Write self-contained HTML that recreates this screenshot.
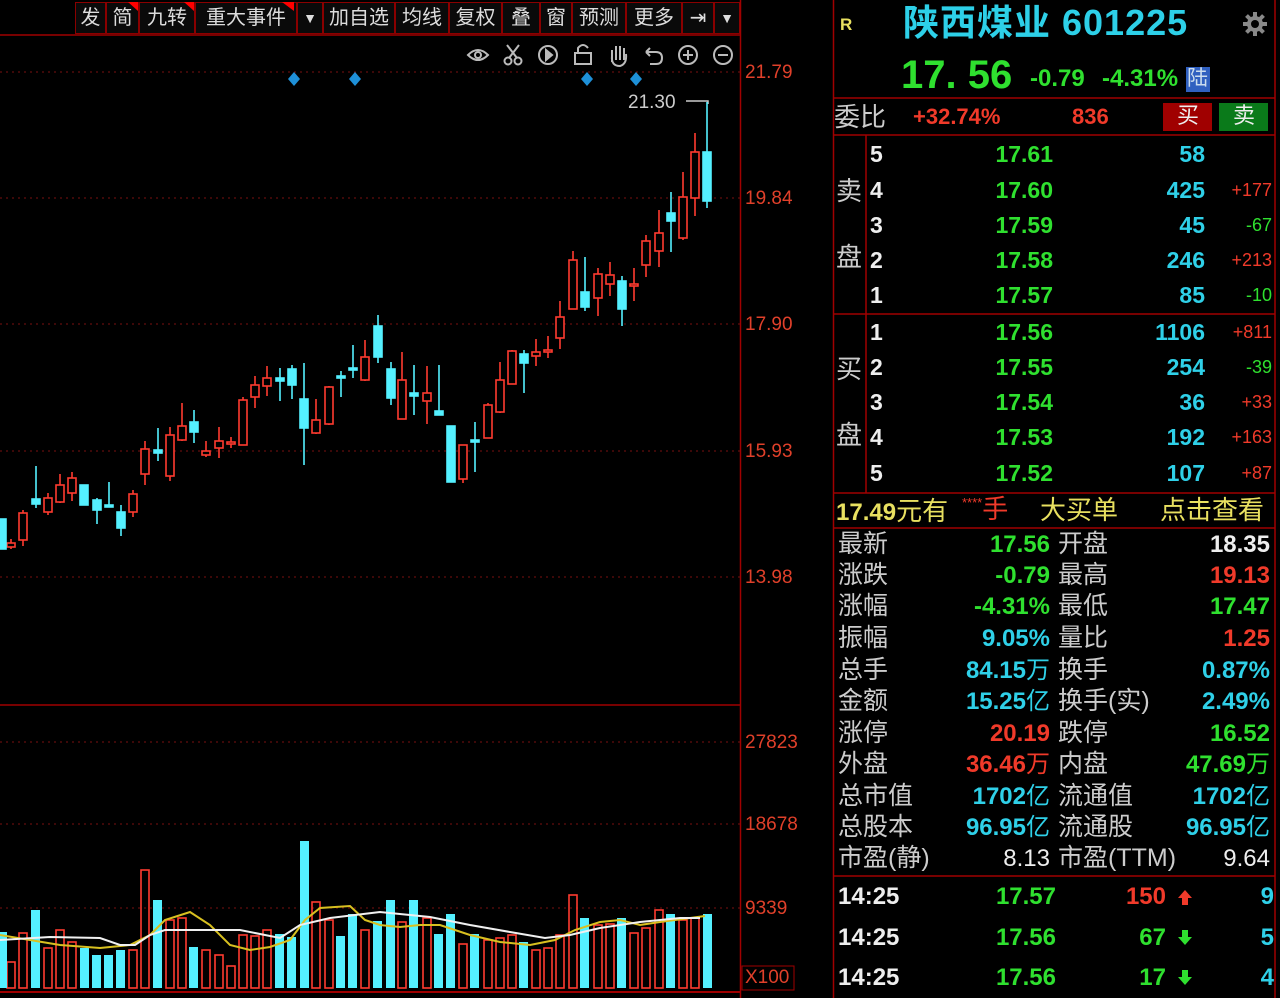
<!DOCTYPE html>
<html><head><meta charset="utf-8"><style>
body{margin:0;width:1280px;height:998px;background:#000;overflow:hidden;position:relative;font-family:"Liberation Sans","Noto Sans CJK SC",sans-serif;}
.a{position:absolute;white-space:nowrap;line-height:1}
.tb{position:absolute;top:2px;height:32px;border:1px solid #8a0000;box-sizing:border-box;color:#ddd;font-size:20px;line-height:30px;text-align:center;background:#0a0a0a}
.ax{position:absolute;left:745px;color:#e0402a;font-size:19px;line-height:1}
.g{color:#2fe02f}.r{color:#f03a2a}.c{color:#2fd0e8}.w{color:#eee}.gr{color:#ccc}.y{color:#e8e060}
.lb{position:absolute;left:838px;color:#ccc;font-size:25px;line-height:1}
.lb2{position:absolute;left:1058px;color:#ccc;font-size:25px;line-height:1}
.v1{position:absolute;right:230px;font-size:24px;font-weight:bold;line-height:1}
.v2{position:absolute;right:10px;font-size:24px;font-weight:bold;line-height:1}
.ob{position:absolute;font-size:23px;font-weight:bold;line-height:1}
</style></head><body>

<div class="tb" style="left:75px;width:31px">发</div>
<div class="tb" style="left:106px;width:33px">简</div>
<div class="tb" style="left:139px;width:56px">九转</div>
<div class="tb" style="left:195px;width:102px">重大事件</div>
<div class="tb" style="left:297px;width:26px;font-size:14px">▼</div>
<div class="tb" style="left:323px;width:72px">加自选</div>
<div class="tb" style="left:395px;width:54px">均线</div>
<div class="tb" style="left:449px;width:53px">复权</div>
<div class="tb" style="left:502px;width:38px">叠</div>
<div class="tb" style="left:540px;width:32px">窗</div>
<div class="tb" style="left:572px;width:54px">预测</div>
<div class="tb" style="left:626px;width:56px">更多</div>
<div class="tb" style="left:682px;width:32px">⇥</div>
<div class="tb" style="left:714px;width:26px;font-size:14px">▼</div>

<svg width="840" height="998" style="position:absolute;left:0;top:0">
<polygon points="128,2 138,2 138,11" fill="#f00"/>
<polygon points="184,2 194,2 194,11" fill="#f00"/>
<polygon points="282,2 294,2 294,11" fill="#f00"/>
<line x1="0" y1="35" x2="740" y2="35" stroke="#a00000" stroke-width="1.5"/>
<line x1="740.5" y1="0" x2="740.5" y2="998" stroke="#a00000" stroke-width="1.5"/>
<line x1="0" y1="705" x2="740" y2="705" stroke="#a00000" stroke-width="1.5"/>
<line x1="0" y1="992" x2="740" y2="992" stroke="#a00000" stroke-width="2"/>
<g stroke="#7a1010" stroke-dasharray="2,4" stroke-width="1">
<line x1="0" y1="72" x2="740" y2="72"/><line x1="0" y1="198" x2="740" y2="198"/><line x1="0" y1="324" x2="740" y2="324"/><line x1="0" y1="451" x2="740" y2="451"/><line x1="0" y1="577" x2="740" y2="577"/>
<line x1="0" y1="742" x2="740" y2="742"/><line x1="0" y1="824" x2="740" y2="824"/><line x1="0" y1="908" x2="740" y2="908"/>
</g>
<g stroke="#bbb" stroke-width="2" fill="none">
<path d="M468 55 Q478 45 488 55 Q478 65 468 55Z"/><circle cx="478" cy="55" r="3"/>
<circle cx="508" cy="61" r="3.5"/><circle cx="518" cy="61" r="3.5"/><path d="M509 58 L519 45 M517 58 L507 45"/>
<circle cx="548" cy="55" r="9"/><path d="M546 50 L552 55 L546 60Z" fill="#bbb"/>
<rect x="575" y="53" width="16" height="11"/><path d="M578 53 V48 Q583 42 588 48"/>
<path d="M612 62 V50 M616 60 V46 M620 60 V46 M624 60 V48 M612 56 Q611 66 620 66 Q627 64 626 54"/>
<path d="M646 52 H656 Q662 52 662 58 Q662 64 656 64 H650 M646 52 L650 48 M646 52 L650 56"/>
<circle cx="688" cy="55" r="9"/><path d="M683 55 H693 M688 50 V60"/>
<circle cx="723" cy="55" r="9"/><path d="M718 55 H728"/>
</g>
<g fill="#1e90d8"><path d="M294 72 L300 79 L294 86 L288 79Z"/><path d="M355 72 L361 79 L355 86 L349 79Z"/><path d="M587 72 L593 79 L587 86 L581 79Z"/><path d="M636 72 L642 79 L636 86 L630 79Z"/></g>
<text x="628" y="108" fill="#ccc" font-size="19" font-family="Liberation Sans">21.30</text>
<path d="M686 101 H708 V104" stroke="#ccc" stroke-width="1.5" fill="none"/>

<g stroke-width="1.6">
<g stroke="#ff3b2f" fill="#000">
<line x1="11" y1="539" x2="11" y2="549"/><rect x="7" y="543" width="8" height="4"/>
<line x1="23" y1="510" x2="23" y2="546"/><rect x="19" y="513" width="8" height="27"/>
<line x1="48" y1="493" x2="48" y2="515"/><rect x="44" y="498" width="8" height="14"/>
<line x1="60" y1="474" x2="60" y2="503"/><rect x="56" y="485" width="8" height="17"/>
<line x1="72" y1="472" x2="72" y2="501"/><rect x="68" y="478" width="8" height="15"/>
<line x1="133" y1="490" x2="133" y2="517"/><rect x="129" y="494" width="8" height="18"/>
<line x1="145" y1="441" x2="145" y2="485"/><rect x="141" y="449" width="8" height="25"/>
<line x1="170" y1="427" x2="170" y2="481"/><rect x="166" y="435" width="8" height="41"/>
<line x1="182" y1="403" x2="182" y2="441"/><rect x="178" y="426" width="8" height="14"/>
<line x1="206" y1="441" x2="206" y2="457"/><rect x="202" y="451" width="8" height="4"/>
<line x1="219" y1="427" x2="219" y2="458"/><rect x="215" y="441" width="8" height="7"/>
<line x1="231" y1="437" x2="231" y2="448"/><rect x="227" y="442" width="8" height="2"/>
<line x1="243" y1="397" x2="243" y2="445"/><rect x="239" y="400" width="8" height="45"/>
<line x1="255" y1="376" x2="255" y2="408"/><rect x="251" y="385" width="8" height="12"/>
<line x1="267" y1="366" x2="267" y2="396"/><rect x="263" y="378" width="8" height="8"/>
<line x1="316" y1="399" x2="316" y2="434"/><rect x="312" y="420" width="8" height="13"/>
<line x1="329" y1="386" x2="329" y2="425"/><rect x="325" y="387" width="8" height="37"/>
<line x1="365" y1="340" x2="365" y2="381"/><rect x="361" y="357" width="8" height="23"/>
<line x1="402" y1="352" x2="402" y2="419"/><rect x="398" y="380" width="8" height="39"/>
<line x1="427" y1="366" x2="427" y2="424"/><rect x="423" y="393" width="8" height="8"/>
<line x1="463" y1="445" x2="463" y2="483"/><rect x="459" y="445" width="8" height="34"/>
<line x1="488" y1="403" x2="488" y2="438"/><rect x="484" y="405" width="8" height="33"/>
<line x1="500" y1="362" x2="500" y2="413"/><rect x="496" y="380" width="8" height="32"/>
<line x1="512" y1="350" x2="512" y2="384"/><rect x="508" y="351" width="8" height="33"/>
<line x1="536" y1="339" x2="536" y2="366"/><rect x="532" y="352" width="8" height="4"/>
<line x1="548" y1="336" x2="548" y2="358"/><rect x="544" y="350" width="8" height="2"/>
<line x1="560" y1="301" x2="560" y2="349"/><rect x="556" y="317" width="8" height="21"/>
<line x1="573" y1="251" x2="573" y2="309"/><rect x="569" y="260" width="8" height="49"/>
<line x1="598" y1="268" x2="598" y2="316"/><rect x="594" y="274" width="8" height="24"/>
<line x1="610" y1="262" x2="610" y2="296"/><rect x="606" y="275" width="8" height="9"/>
<line x1="634" y1="268" x2="634" y2="301"/><rect x="630" y="284" width="8" height="2"/>
<line x1="646" y1="235" x2="646" y2="277"/><rect x="642" y="241" width="8" height="24"/>
<line x1="659" y1="210" x2="659" y2="267"/><rect x="655" y="233" width="8" height="18"/>
<line x1="683" y1="172" x2="683" y2="240"/><rect x="679" y="197" width="8" height="41"/>
<line x1="695" y1="133" x2="695" y2="216"/><rect x="691" y="152" width="8" height="46"/>
</g>
<g stroke="#54f0ff" fill="#54f0ff">
<rect x="-2" y="519" width="8" height="30"/>
<line x1="36" y1="466" x2="36" y2="508"/><rect x="32" y="499" width="8" height="5"/>
<rect x="80" y="485" width="8" height="20"/>
<line x1="97" y1="498" x2="97" y2="524"/><rect x="93" y="500" width="8" height="10"/>
<line x1="109" y1="482" x2="109" y2="507"/><rect x="105" y="505" width="8" height="2"/>
<line x1="121" y1="505" x2="121" y2="536"/><rect x="117" y="512" width="8" height="16"/>
<line x1="158" y1="428" x2="158" y2="461"/><rect x="154" y="450" width="8" height="3"/>
<line x1="194" y1="410" x2="194" y2="443"/><rect x="190" y="422" width="8" height="10"/>
<line x1="280" y1="368" x2="280" y2="401"/><rect x="276" y="378" width="8" height="3"/>
<line x1="292" y1="365" x2="292" y2="399"/><rect x="288" y="369" width="8" height="16"/>
<line x1="304" y1="363" x2="304" y2="465"/><rect x="300" y="399" width="8" height="29"/>
<line x1="341" y1="371" x2="341" y2="397"/><rect x="337" y="376" width="8" height="2"/>
<line x1="353" y1="345" x2="353" y2="378"/><rect x="349" y="368" width="8" height="2"/>
<line x1="378" y1="315" x2="378" y2="363"/><rect x="374" y="326" width="8" height="31"/>
<line x1="391" y1="362" x2="391" y2="405"/><rect x="387" y="369" width="8" height="29"/>
<line x1="414" y1="365" x2="414" y2="415"/><rect x="410" y="393" width="8" height="3"/>
<line x1="439" y1="365" x2="439" y2="415"/><rect x="435" y="411" width="8" height="4"/>
<rect x="447" y="426" width="8" height="56"/>
<line x1="475" y1="422" x2="475" y2="472"/><rect x="471" y="440" width="8" height="2"/>
<line x1="524" y1="350" x2="524" y2="393"/><rect x="520" y="354" width="8" height="9"/>
<line x1="585" y1="257" x2="585" y2="311"/><rect x="581" y="292" width="8" height="15"/>
<line x1="622" y1="276" x2="622" y2="326"/><rect x="618" y="281" width="8" height="28"/>
<line x1="671" y1="192" x2="671" y2="252"/><rect x="667" y="213" width="8" height="8"/>
<line x1="707" y1="102" x2="707" y2="208"/><rect x="703" y="152" width="8" height="49"/>
</g>
</g>

<g stroke-width="1.6">
<g stroke="#ff3b2f" fill="none">
<rect x="7" y="962" width="8" height="26"/><rect x="19" y="933" width="8" height="55"/><rect x="44" y="948" width="8" height="40"/><rect x="56" y="930" width="8" height="58"/><rect x="68" y="942" width="8" height="46"/><rect x="129" y="950" width="8" height="38"/><rect x="141" y="870" width="8" height="118"/><rect x="166" y="920" width="8" height="68"/><rect x="178" y="918" width="8" height="70"/><rect x="202" y="950" width="8" height="38"/><rect x="215" y="955" width="8" height="33"/><rect x="227" y="966" width="8" height="22"/><rect x="239" y="935" width="8" height="53"/><rect x="251" y="936" width="8" height="52"/><rect x="263" y="930" width="8" height="58"/><rect x="312" y="902" width="8" height="86"/><rect x="325" y="920" width="8" height="68"/><rect x="361" y="930" width="8" height="58"/><rect x="398" y="922" width="8" height="66"/><rect x="423" y="918" width="8" height="70"/><rect x="459" y="944" width="8" height="44"/><rect x="484" y="940" width="8" height="48"/><rect x="496" y="938" width="8" height="50"/><rect x="508" y="935" width="8" height="53"/><rect x="532" y="950" width="8" height="38"/><rect x="544" y="948" width="8" height="40"/><rect x="556" y="935" width="8" height="53"/><rect x="569" y="895" width="8" height="93"/><rect x="594" y="925" width="8" height="63"/><rect x="606" y="924" width="8" height="64"/><rect x="630" y="933" width="8" height="55"/><rect x="642" y="928" width="8" height="60"/><rect x="655" y="910" width="8" height="78"/><rect x="679" y="920" width="8" height="68"/><rect x="691" y="918" width="8" height="70"/>
</g>
<g fill="#54f0ff">
<rect x="-2" y="932" width="9" height="56"/><rect x="31" y="910" width="9" height="78"/><rect x="80" y="948" width="9" height="40"/><rect x="92" y="955" width="9" height="33"/><rect x="104" y="955" width="9" height="33"/><rect x="116" y="950" width="9" height="38"/><rect x="153" y="900" width="9" height="88"/><rect x="189" y="947" width="9" height="41"/><rect x="275" y="934" width="9" height="54"/><rect x="287" y="937" width="9" height="51"/><rect x="300" y="841" width="9" height="147"/><rect x="336" y="936" width="9" height="52"/><rect x="348" y="914" width="9" height="74"/><rect x="373" y="921" width="9" height="67"/><rect x="386" y="900" width="9" height="88"/><rect x="409" y="900" width="9" height="88"/><rect x="434" y="934" width="9" height="54"/><rect x="446" y="914" width="9" height="74"/><rect x="470" y="934" width="9" height="54"/><rect x="519" y="942" width="9" height="46"/><rect x="580" y="918" width="9" height="70"/><rect x="617" y="918" width="9" height="70"/><rect x="666" y="914" width="9" height="74"/><rect x="703" y="914" width="9" height="74"/>
</g>
</g>
<polyline fill="none" stroke="#d8c020" stroke-width="2" points="0,935 30,940 60,945 100,948 130,945 150,935 165,920 190,912 210,925 230,945 250,950 270,947 290,940 305,920 320,908 350,906 365,920 380,925 400,927 420,925 440,925 470,935 500,942 530,945 555,940 575,930 600,922 620,920 640,925 660,922 690,918 705,916"/>
<polyline fill="none" stroke="#f0f0f0" stroke-width="2" points="0,940 50,937 100,938 120,945 135,945 150,935 165,930 200,930 240,930 265,935 280,938 300,925 330,918 380,912 410,915 430,917 470,925 510,932 545,938 570,935 600,928 640,922 680,918 700,918"/>
<rect x="742" y="966" width="52" height="24" fill="none" stroke="#a00000"/>
</svg>

<div class="ax" style="top:63px">21.79</div>
<div class="ax" style="top:189px">19.84</div>
<div class="ax" style="top:315px">17.90</div>
<div class="ax" style="top:442px">15.93</div>
<div class="ax" style="top:568px">13.98</div>
<div class="ax" style="top:733px">27823</div>
<div class="ax" style="top:815px">18678</div>
<div class="ax" style="top:899px">9339</div>
<div class="ax" style="top:968px">X100</div>

<svg width="450" height="998" style="position:absolute;left:830px;top:0">
<g stroke="#a00000" stroke-width="1.5">
<line x1="3.5" y1="0" x2="3.5" y2="998"/><line x1="445" y1="0" x2="445" y2="998"/>
<line x1="3" y1="98" x2="445" y2="98"/><line x1="3" y1="135" x2="445" y2="135"/><line x1="3" y1="314" x2="445" y2="314"/><line x1="3" y1="493" x2="445" y2="493"/><line x1="3" y1="528" x2="445" y2="528"/><line x1="3" y1="876" x2="445" y2="876"/>
<line x1="36" y1="135" x2="36" y2="493"/>
</g>
<g transform="translate(425,24)" fill="#888"><circle r="8"/><g stroke="#888" stroke-width="4"><line x1="-12" y1="0" x2="12" y2="0"/><line x1="0" y1="-12" x2="0" y2="12"/><line x1="-8.5" y1="-8.5" x2="8.5" y2="8.5"/><line x1="-8.5" y1="8.5" x2="8.5" y2="-8.5"/></g><circle r="4" fill="#000"/></g>
<rect x="333" y="103" width="49" height="28" fill="#a00000"/><rect x="389" y="103" width="49" height="28" fill="#0a7a1a"/>
<rect x="356" y="67" width="24" height="25" fill="#3060c0"/>
<path d="M348 898 l7 -8 l7 8 h-4 v7 h-6 v-7z" fill="#f03a2a"/>
<path d="M348 937 l7 8 l7 -8 h-4 v-7 h-6 v7z" fill="#2fe02f"/>
<path d="M348 977 l7 8 l7 -8 h-4 v-7 h-6 v7z" fill="#2fe02f"/>
</svg>

<div class="a y" style="left:840px;top:16px;font-size:17px;font-weight:bold">R</div>
<div class="a" style="left:903px;top:5px;font-size:36px;font-weight:bold;color:#2dd0e8;letter-spacing:1px">陕西煤业 601225</div>
<div class="a g" style="left:901px;top:55px;font-size:40px;font-weight:bold">17. 56</div>
<div class="a g" style="left:1030px;top:67px;font-size:24px;font-weight:bold">-0.79</div>
<div class="a g" style="left:1102px;top:67px;font-size:24px;font-weight:bold">-4.31%</div>
<div class="a" style="left:1187px;top:68px;font-size:21px;color:#cde">陆</div>

<div class="a gr" style="left:834px;top:104px;font-size:26px">委比</div>
<div class="a r" style="left:913px;top:106px;font-size:22px;font-weight:bold">+32.74%</div>
<div class="a r" style="left:1072px;top:106px;font-size:22px;font-weight:bold">836</div>
<div class="a w" style="left:1177px;top:105px;font-size:22px">买</div>
<div class="a w" style="left:1233px;top:105px;font-size:22px">卖</div>

<div class="a gr" style="left:836px;top:178px;font-size:26px">卖</div>
<div class="a gr" style="left:836px;top:244px;font-size:26px">盘</div>
<div class="a gr" style="left:836px;top:356px;font-size:26px">买</div>
<div class="a gr" style="left:836px;top:422px;font-size:26px">盘</div>

<div class="ob w" style="left:870px;top:143px">5</div><div class="ob g" style="right:227px;top:143px">17.61</div><div class="ob c" style="right:75px;top:143px">58</div>
<div class="ob w" style="left:870px;top:179px">4</div><div class="ob g" style="right:227px;top:179px">17.60</div><div class="ob c" style="right:75px;top:179px">425</div><div class="ob r" style="right:8px;top:181px;font-size:18px;font-weight:normal">+177</div>
<div class="ob w" style="left:870px;top:214px">3</div><div class="ob g" style="right:227px;top:214px">17.59</div><div class="ob c" style="right:75px;top:214px">45</div><div class="ob g" style="right:8px;top:216px;font-size:18px;font-weight:normal">-67</div>
<div class="ob w" style="left:870px;top:249px">2</div><div class="ob g" style="right:227px;top:249px">17.58</div><div class="ob c" style="right:75px;top:249px">246</div><div class="ob r" style="right:8px;top:251px;font-size:18px;font-weight:normal">+213</div>
<div class="ob w" style="left:870px;top:284px">1</div><div class="ob g" style="right:227px;top:284px">17.57</div><div class="ob c" style="right:75px;top:284px">85</div><div class="ob g" style="right:8px;top:286px;font-size:18px;font-weight:normal">-10</div>
<div class="ob w" style="left:870px;top:321px">1</div><div class="ob g" style="right:227px;top:321px">17.56</div><div class="ob c" style="right:75px;top:321px">1106</div><div class="ob r" style="right:8px;top:323px;font-size:18px;font-weight:normal">+811</div>
<div class="ob w" style="left:870px;top:356px">2</div><div class="ob g" style="right:227px;top:356px">17.55</div><div class="ob c" style="right:75px;top:356px">254</div><div class="ob g" style="right:8px;top:358px;font-size:18px;font-weight:normal">-39</div>
<div class="ob w" style="left:870px;top:391px">3</div><div class="ob g" style="right:227px;top:391px">17.54</div><div class="ob c" style="right:75px;top:391px">36</div><div class="ob r" style="right:8px;top:393px;font-size:18px;font-weight:normal">+33</div>
<div class="ob w" style="left:870px;top:426px">4</div><div class="ob g" style="right:227px;top:426px">17.53</div><div class="ob c" style="right:75px;top:426px">192</div><div class="ob r" style="right:8px;top:428px;font-size:18px;font-weight:normal">+163</div>
<div class="ob w" style="left:870px;top:462px">5</div><div class="ob g" style="right:227px;top:462px">17.52</div><div class="ob c" style="right:75px;top:462px">107</div><div class="ob r" style="right:8px;top:464px;font-size:18px;font-weight:normal">+87</div>

<div class="a y" style="left:836px;top:498px;font-size:24px;font-weight:bold">17.49<span style="font-weight:normal;font-size:26px">元有</span></div>
<div class="a r" style="left:962px;top:496px;font-size:26px"><span style="font-size:13px;vertical-align:top">****</span>手</div>
<div class="a y" style="left:1040px;top:497px;font-size:26px">大买单</div>
<div class="a y" style="left:1160px;top:497px;font-size:26px">点击查看</div>

<div class="lb" style="top:532px">最新</div><div class="v1 g" style="top:533px">17.56</div><div class="lb2" style="top:532px">开盘</div><div class="v2 w" style="top:533px">18.35</div>
<div class="lb" style="top:563px">涨跌</div><div class="v1 g" style="top:564px">-0.79</div><div class="lb2" style="top:563px">最高</div><div class="v2 r" style="top:564px">19.13</div>
<div class="lb" style="top:594px">涨幅</div><div class="v1 g" style="top:595px">-4.31%</div><div class="lb2" style="top:594px">最低</div><div class="v2 g" style="top:595px">17.47</div>
<div class="lb" style="top:626px">振幅</div><div class="v1 c" style="top:627px">9.05%</div><div class="lb2" style="top:626px">量比</div><div class="v2 r" style="top:627px">1.25</div>
<div class="lb" style="top:658px">总手</div><div class="v1 c" style="top:659px">84.15<span style="font-weight:normal">万</span></div><div class="lb2" style="top:658px">换手</div><div class="v2 c" style="top:659px">0.87%</div>
<div class="lb" style="top:689px">金额</div><div class="v1 c" style="top:690px">15.25<span style="font-weight:normal">亿</span></div><div class="lb2" style="top:689px">换手(实)</div><div class="v2 c" style="top:690px">2.49%</div>
<div class="lb" style="top:721px">涨停</div><div class="v1 r" style="top:722px">20.19</div><div class="lb2" style="top:721px">跌停</div><div class="v2 g" style="top:722px">16.52</div>
<div class="lb" style="top:752px">外盘</div><div class="v1 r" style="top:753px">36.46<span style="font-weight:normal">万</span></div><div class="lb2" style="top:752px">内盘</div><div class="v2 g" style="top:753px">47.69<span style="font-weight:normal">万</span></div>
<div class="lb" style="top:784px">总市值</div><div class="v1 c" style="top:785px">1702<span style="font-weight:normal">亿</span></div><div class="lb2" style="top:784px">流通值</div><div class="v2 c" style="top:785px">1702<span style="font-weight:normal">亿</span></div>
<div class="lb" style="top:815px">总股本</div><div class="v1 c" style="top:816px">96.95<span style="font-weight:normal">亿</span></div><div class="lb2" style="top:815px">流通股</div><div class="v2 c" style="top:816px">96.95<span style="font-weight:normal">亿</span></div>
<div class="lb" style="top:846px">市盈(静)</div><div class="v1 w" style="top:847px;font-weight:normal">8.13</div><div class="lb2" style="top:846px">市盈(TTM)</div><div class="v2 w" style="top:847px;font-weight:normal">9.64</div>

<div class="ob w" style="left:838px;top:885px;font-size:24px">14:25</div><div class="ob g" style="right:224px;top:885px;font-size:24px">17.57</div><div class="ob r" style="right:114px;top:885px;font-size:24px">150</div><div class="ob c" style="right:6px;top:885px;font-size:24px">9</div>
<div class="ob w" style="left:838px;top:926px;font-size:24px">14:25</div><div class="ob g" style="right:224px;top:926px;font-size:24px">17.56</div><div class="ob g" style="right:114px;top:926px;font-size:24px">67</div><div class="ob c" style="right:6px;top:926px;font-size:24px">5</div>
<div class="ob w" style="left:838px;top:966px;font-size:24px">14:25</div><div class="ob g" style="right:224px;top:966px;font-size:24px">17.56</div><div class="ob g" style="right:114px;top:966px;font-size:24px">17</div><div class="ob c" style="right:6px;top:966px;font-size:24px">4</div>
</body></html>
